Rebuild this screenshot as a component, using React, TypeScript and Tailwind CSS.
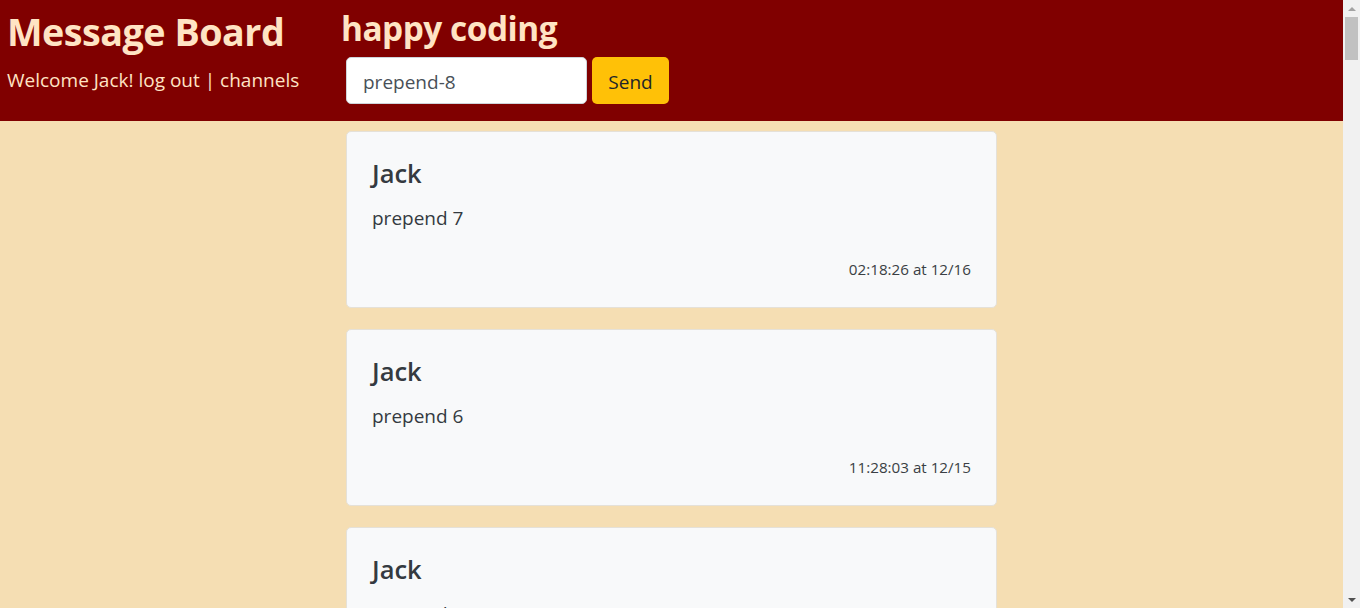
const messages = [
  { author: 'Jack', text: 'prepend 7', time: '02:18:26 at 12/16' },
  { author: 'Jack', text: 'prepend 6', time: '11:28:03 at 12/15' },
  { author: 'Jack', text: 'prepend 5', time: '10:02:41 at 12/15' },
];

function FakeScrollbar() {
  return (
    <div className="fixed right-0 top-0 flex h-screen w-[17px] flex-col items-center bg-[#f1f1f1]">
      <div className="flex h-[17px] w-full items-center justify-center">
        <div className="h-0 w-0 border-x-[4px] border-b-[4px] border-x-transparent border-b-[#a3a3a3]" />
      </div>
      <div className="h-[43px] w-[13px] bg-[#c1c1c1]" />
      <div className="flex-1" />
      <div className="flex h-[17px] w-full items-center justify-center">
        <div className="h-0 w-0 border-x-[4px] border-t-[4px] border-x-transparent border-t-[#505050]" />
      </div>
    </div>
  );
}

export default function App() {
  return (
    <div className="min-h-screen bg-[#f5deb3] pr-[17px] font-['Open_Sans',sans-serif] text-[#212529]">
      <header className="flex h-[121px] bg-[#800000] text-[#ffe4c4]">
        <div className="w-[341px] shrink-0 pl-[7px] pt-[8px]">
          <h1 className="text-[37.7px] font-bold leading-[48px] tracking-[-0.5px]">Message Board</h1>
          <div className="mt-[12px] text-[19px] leading-[24px]">
            Welcome Jack! <a className="cursor-pointer">log out</a> | <a className="cursor-pointer">channels</a>
          </div>
        </div>
        <div className="pt-[6px]">
          <h2 className="text-[33.4px] font-bold leading-[44px] tracking-[-0.5px]">happy coding</h2>
          <form className="ml-[5px] mt-[7px] flex gap-[5px]" onSubmit={(e) => e.preventDefault()}>
            <input
              type="text"
              defaultValue="prepend-8"
              className="h-[47px] w-[241px] rounded-[5px] border border-[#ced4da] bg-white px-[16px] pt-[3px] text-[19px] text-[#495057] outline-none"
            />
            <button className="h-[47px] w-[77px] rounded-[5px] bg-[#ffc107] pt-[3px] text-[19px] text-[#212529]">Send</button>
          </form>
        </div>
      </header>

      <main className="ml-[346px] flex w-[651px] flex-col gap-[21px] py-[10px]">
        {messages.map((m, i) => (
          <div key={i} className="h-[177px] rounded-[5px] border border-[#e5e1d8] bg-[#f8f9fa] px-[25px] pt-[24px] text-[#343a40]">
            <h4 className="text-[25.5px] font-semibold leading-[34px]">{m.author}</h4>
            <p className="mt-[14px] text-[19px] leading-[28px]">{m.text}</p>
            <div className="mt-[27px] text-right text-[15.2px] leading-[20px] text-[#3a3f44]">{m.time}</div>
          </div>
        ))}
      </main>
      <FakeScrollbar />
    </div>
  );
}
